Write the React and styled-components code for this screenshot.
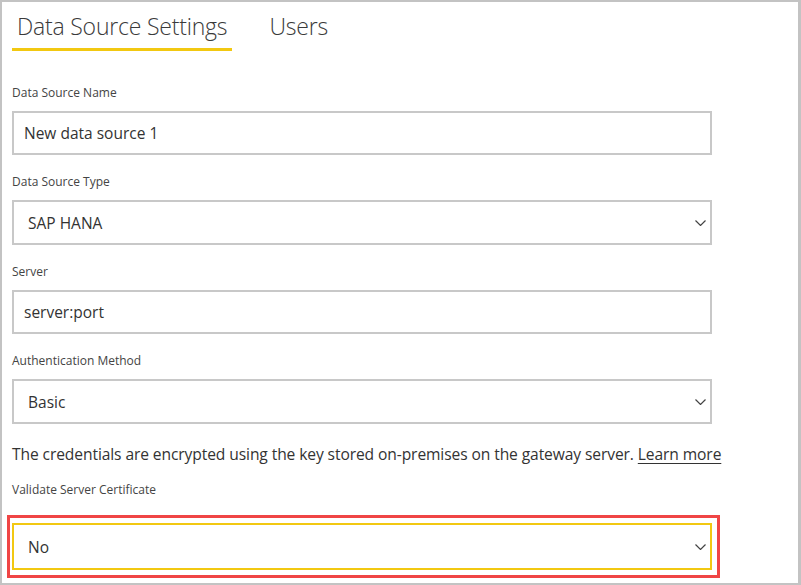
import React from "react";
import styled, { createGlobalStyle } from "styled-components";

const GlobalStyle = createGlobalStyle`
  html, body {
    margin: 0;
    padding: 0;
    background: #fff;
  }
  body {
    font-family: "Open Sans", "Noto Sans", "Liberation Sans", sans-serif;
    color: #333;
  }
`;

const Frame = styled.div`
  box-sizing: border-box;
  width: 801px;
  height: 585px;
  border: 2px solid #c3c3c3;
  border-right-width: 3px;
  padding: 0 0 0 10px;
  overflow: hidden;
`;

const Tabs = styled.div`
  display: flex;
  gap: 32px;
  height: 49px;
  margin-bottom: 34px;
`;

const Tab = styled.div`
  box-sizing: border-box;
  height: 49px;
  padding: 8px 5px 0 5px;
  font-size: 23px;
  font-weight: 300;
  letter-spacing: -0.2px;
  color: #3a3a3a;
  border-bottom: 3px solid ${(p) => (p.active ? "#f2c811" : "transparent")};
`;

const Label = styled.div`
  font-size: 12px;
  color: #444;
  line-height: 16px;
  margin-bottom: ${(p) => p.gap ?? 10}px;
`;

const Field = styled.div`
  box-sizing: border-box;
  width: 700px;
  height: ${(p) => p.h ?? 44}px;
  border: 2px solid ${(p) => (p.focus ? "#f2c811" : "#c8c8c8")};
  display: flex;
  align-items: center;
  justify-content: space-between;
  padding: 0 4px 0 ${(p) => (p.select ? 14 : 10)}px;
  font-size: 15.5px;
  color: #333;
  margin-bottom: ${(p) => p.gap ?? 19}px;
`;

const Chevron = () => (
  <svg width="11" height="6" viewBox="0 0 11 6">
    <path d="M0.5 0.5 L5.5 5.5 L10.5 0.5" fill="none" stroke="#444" strokeWidth="1.2" />
  </svg>
);

const Note = styled.p`
  margin: 0 0 17px 0;
  font-size: 15.6px;
  color: #333;
  line-height: 22px;
  letter-spacing: -0.1px;
`;

const LearnMore = styled.a`
  color: #333;
  text-decoration: underline;
  text-underline-offset: 3px;
`;

const Highlight = styled.div`
  box-sizing: border-box;
  width: 713px;
  margin-left: -5px;
  border: 3px solid #f04545;
  padding: 5px 5px 5px 2px;
`;

export default function App() {
  return (
    <>
      <GlobalStyle />
      <Frame>
        <Tabs>
          <Tab active>Data Source Settings</Tab>
          <Tab>Users</Tab>
        </Tabs>

        <Label>Data Source Name</Label>
        <Field>New data source 1</Field>

        <Label>Data Source Type</Label>
        <Field select h={45}>
          SAP HANA
          <Chevron />
        </Field>

        <Label>Server</Label>
        <Field>server:port</Field>

        <Label>Authentication Method</Label>
        <Field select h={45}>
          Basic
          <Chevron />
        </Field>

        <Note>
          The credentials are encrypted using the key stored on-premises on the gateway server.{" "}
          <LearnMore>Learn more</LearnMore>
        </Note>

        <Label gap={17}>Validate Server Certificate</Label>
        <Highlight>
          <Field select focus h={47} gap={0}>
            No
            <Chevron />
          </Field>
        </Highlight>
      </Frame>
    </>
  );
}
